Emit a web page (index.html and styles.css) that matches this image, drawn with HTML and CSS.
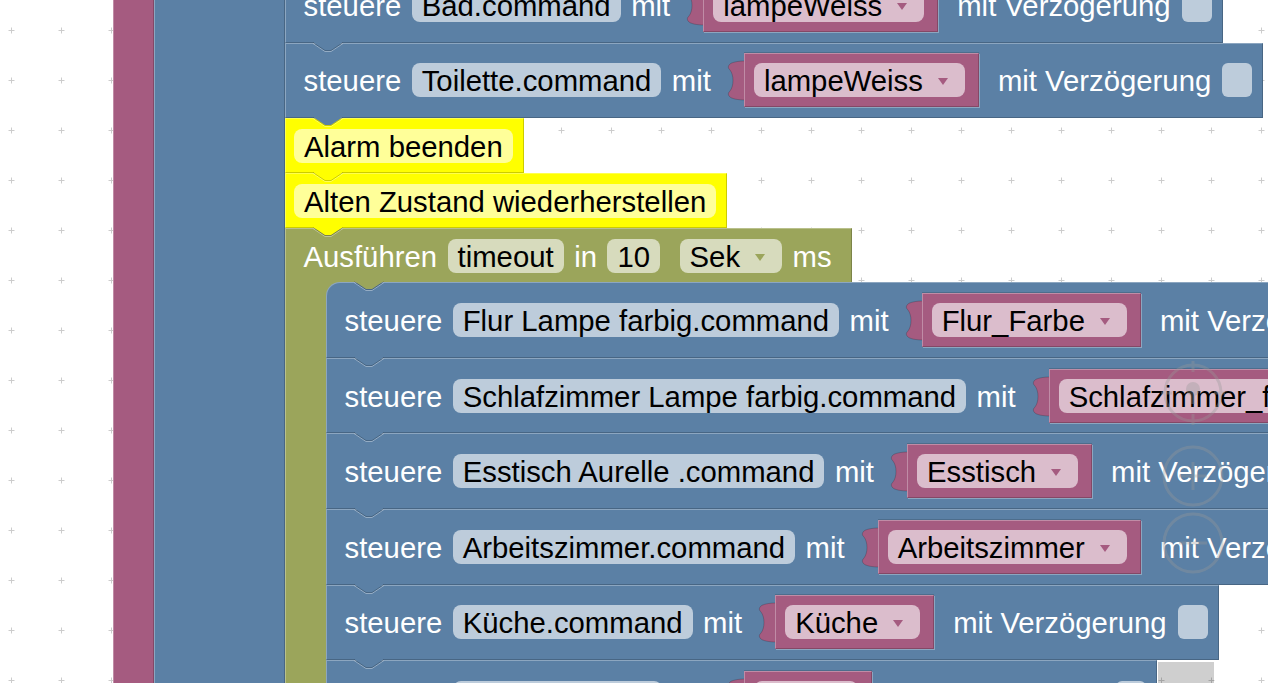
FILE: index.html
```html
<!DOCTYPE html>
<html lang="de">

<head>
    <meta charset="UTF-8">
    <meta name="viewport" content="width=device-width, initial-scale=1.0">
    <title>Blockly – Alarm</title>
    <link rel="stylesheet" href="styles.css">
</head>

<body>
    <div class="workspace">
        <svg class="grid" width="1268" height="683">
            <defs>
                <pattern id="gridCross" width="50" height="50" patternUnits="userSpaceOnUse">
                    <path d="M8.5 30.5h6M11.5 27.5v6" stroke="#cccccc" />
                </pattern>
            </defs>
            <rect width="1268" height="683" fill="url(#gridCross)" />
        </svg>

        <div class="marker"></div>

        <div class="canvas">
            <div class="c-block event">
                <div class="arm"></div>
                <div class="c-block logic">
                    <div class="arm"></div>
                    <div class="stack">

                        <div class="stmt blue">
                            <span class="label">steuere</span>
                            <span class="field">Bad.command</span>
                            <span class="label">mit</span>
                            <span class="value">
                                <svg class="tab" viewBox="0 0 17 40"><path d="M17 0C11 0 3 1 1 4C0 6 0 7 2 9C6 14 6 25 2 30C0 32 0 33 1 35C3 38 11 39 17 39Z" /></svg>
                                <span class="body"><span class="field dd">lampeWeiss<i></i></span></span>
                            </span>
                            <span class="label">mit Verzögerung</span>
                            <span class="check"></span>
                            <svg class="notch" width="32" height="11"><path class="nl" d="M0 1.5L12 9.5H18L30 1.5" /><path class="nf" d="M0 0L12 8H18L30 0Z" /><path class="nd" d="M0 .5L12 8.5H18L30 .5" /></svg>
                        </div>

                        <div class="stmt blue">
                            <span class="label">steuere</span>
                            <span class="field">Toilette.command</span>
                            <span class="label">mit</span>
                            <span class="value">
                                <svg class="tab" viewBox="0 0 17 40"><path d="M17 0C11 0 3 1 1 4C0 6 0 7 2 9C6 14 6 25 2 30C0 32 0 33 1 35C3 38 11 39 17 39Z" /></svg>
                                <span class="body"><span class="field dd">lampeWeiss<i></i></span></span>
                            </span>
                            <span class="label">mit Verzögerung</span>
                            <span class="check"></span>
                            <svg class="notch" width="32" height="11"><path class="nl" d="M0 1.5L12 9.5H18L30 1.5" /><path class="nf" d="M0 0L12 8H18L30 0Z" /><path class="nd" d="M0 .5L12 8.5H18L30 .5" /></svg>
                        </div>

                        <div class="stmt yellow">
                            <span class="field">Alarm beenden</span>
                            <svg class="notch" width="32" height="11"><path class="nl" d="M0 1.5L12 9.5H18L30 1.5" /><path class="nf" d="M0 0L12 8H18L30 0Z" /><path class="nd" d="M0 .5L12 8.5H18L30 .5" /></svg>
                        </div>

                        <div class="stmt yellow">
                            <span class="field">Alten Zustand wiederherstellen</span>
                            <svg class="notch" width="32" height="11"><path class="nl" d="M0 1.5L12 9.5H18L30 1.5" /><path class="nf" d="M0 0L12 8H18L30 0Z" /><path class="nd" d="M0 .5L12 8.5H18L30 .5" /></svg>
                        </div>

                        <div class="c-stmt timer">
                            <div class="stmt head">
                                <span class="label">Ausführen</span>
                                <span class="field">timeout</span>
                                <span class="label">in</span>
                                <span class="field">10</span>
                                <span class="field dd">Sek<i></i></span>
                                <span class="label">ms</span>
                                <svg class="notch" width="32" height="11"><path class="nl" d="M0 1.5L12 9.5H18L30 1.5" /><path class="nf" d="M0 0L12 8H18L30 0Z" /><path class="nd" d="M0 .5L12 8.5H18L30 .5" /></svg>
                            </div>
                            <div class="c-body">
                                <div class="arm"></div>
                                <div class="stack">

                                    <div class="stmt blue">
                                        <span class="label">steuere</span>
                                        <span class="field">Flur Lampe farbig.command</span>
                                        <span class="label">mit</span>
                                        <span class="value">
                                            <svg class="tab" viewBox="0 0 17 40"><path d="M17 0C11 0 3 1 1 4C0 6 0 7 2 9C6 14 6 25 2 30C0 32 0 33 1 35C3 38 11 39 17 39Z" /></svg>
                                            <span class="body"><span class="field dd">Flur_Farbe<i></i></span></span>
                                        </span>
                                        <span class="label">mit Verzögerung</span>
                                        <span class="check"></span>
                                        <svg class="notch" width="32" height="11"><path class="nl" d="M0 1.5L12 9.5H18L30 1.5" /><path class="nf" d="M0 0L12 8H18L30 0Z" /><path class="nd" d="M0 .5L12 8.5H18L30 .5" /></svg>
                                    </div>

                                    <div class="stmt blue">
                                        <span class="label">steuere</span>
                                        <span class="field">Schlafzimmer Lampe farbig.command</span>
                                        <span class="label">mit</span>
                                        <span class="value">
                                            <svg class="tab" viewBox="0 0 17 40"><path d="M17 0C11 0 3 1 1 4C0 6 0 7 2 9C6 14 6 25 2 30C0 32 0 33 1 35C3 38 11 39 17 39Z" /></svg>
                                            <span class="body"><span class="field dd">Schlafzimmer_farbig<i></i></span></span>
                                        </span>
                                        <span class="label">mit Verzögerung</span>
                                        <span class="check"></span>
                                        <svg class="notch" width="32" height="11"><path class="nl" d="M0 1.5L12 9.5H18L30 1.5" /><path class="nf" d="M0 0L12 8H18L30 0Z" /><path class="nd" d="M0 .5L12 8.5H18L30 .5" /></svg>
                                    </div>

                                    <div class="stmt blue">
                                        <span class="label">steuere</span>
                                        <span class="field">Esstisch Aurelle .command</span>
                                        <span class="label">mit</span>
                                        <span class="value">
                                            <svg class="tab" viewBox="0 0 17 40"><path d="M17 0C11 0 3 1 1 4C0 6 0 7 2 9C6 14 6 25 2 30C0 32 0 33 1 35C3 38 11 39 17 39Z" /></svg>
                                            <span class="body"><span class="field dd">Esstisch<i></i></span></span>
                                        </span>
                                        <span class="label">mit Verzögerung</span>
                                        <span class="check"></span>
                                        <svg class="notch" width="32" height="11"><path class="nl" d="M0 1.5L12 9.5H18L30 1.5" /><path class="nf" d="M0 0L12 8H18L30 0Z" /><path class="nd" d="M0 .5L12 8.5H18L30 .5" /></svg>
                                    </div>

                                    <div class="stmt blue">
                                        <span class="label">steuere</span>
                                        <span class="field">Arbeitszimmer.command</span>
                                        <span class="label">mit</span>
                                        <span class="value">
                                            <svg class="tab" viewBox="0 0 17 40"><path d="M17 0C11 0 3 1 1 4C0 6 0 7 2 9C6 14 6 25 2 30C0 32 0 33 1 35C3 38 11 39 17 39Z" /></svg>
                                            <span class="body"><span class="field dd">Arbeitszimmer<i></i></span></span>
                                        </span>
                                        <span class="label">mit Verzögerung</span>
                                        <span class="check"></span>
                                        <svg class="notch" width="32" height="11"><path class="nl" d="M0 1.5L12 9.5H18L30 1.5" /><path class="nf" d="M0 0L12 8H18L30 0Z" /><path class="nd" d="M0 .5L12 8.5H18L30 .5" /></svg>
                                    </div>

                                    <div class="stmt blue">
                                        <span class="label">steuere</span>
                                        <span class="field">Küche.command</span>
                                        <span class="label">mit</span>
                                        <span class="value">
                                            <svg class="tab" viewBox="0 0 17 40"><path d="M17 0C11 0 3 1 1 4C0 6 0 7 2 9C6 14 6 25 2 30C0 32 0 33 1 35C3 38 11 39 17 39Z" /></svg>
                                            <span class="body"><span class="field dd">Küche<i></i></span></span>
                                        </span>
                                        <span class="label">mit Verzögerung</span>
                                        <span class="check"></span>
                                        <svg class="notch" width="32" height="11"><path class="nl" d="M0 1.5L12 9.5H18L30 1.5" /><path class="nf" d="M0 0L12 8H18L30 0Z" /><path class="nd" d="M0 .5L12 8.5H18L30 .5" /></svg>
                                    </div>

                                    <div class="stmt blue">
                                        <span class="label">steuere</span>
                                        <span class="field">Bad.command</span>
                                        <span class="label">mit</span>
                                        <span class="value">
                                            <svg class="tab" viewBox="0 0 17 40"><path d="M17 0C11 0 3 1 1 4C0 6 0 7 2 9C6 14 6 25 2 30C0 32 0 33 1 35C3 38 11 39 17 39Z" /></svg>
                                            <span class="body"><span class="field dd">Bad<i></i></span></span>
                                        </span>
                                        <span class="label">mit Verzögerung</span>
                                        <span class="check"></span>
                                    </div>

                                </div>
                            </div>
                        </div>

                    </div>
                </div>
            </div>
        </div>

        <!-- Zoom-Steuerung (halbtransparent) -->
        <svg class="zoom" width="70" height="230" viewBox="0 0 70 230">
            <g fill="none" stroke="#999999" stroke-width="3">
                <circle cx="35" cy="35" r="28" />
                <path d="M35 3v11M35 56v11M3 35h11M56 35h11" />
                <circle cx="35" cy="118" r="29" />
                <path d="M35 104v28M21 118h28" />
                <circle cx="35" cy="185" r="29" />
                <path d="M21 185h28" />
            </g>
            <circle cx="35" cy="31" r="7" fill="#999999" />
            <path d="M35 36v10" stroke="#999999" stroke-width="4" />
        </svg>
    </div>
</body>

</html>
```

FILE: styles.css
```css
body {
    margin: 0;
    background-color: #ffffff;
    font-family: "Liberation Sans", Arial, sans-serif;
}

.workspace {
    position: relative;
    width: 1268px;
    height: 683px;
    overflow: hidden;
    background-color: #ffffff;
}

.grid {
    position: absolute;
    left: 0;
    top: 0;
}

.marker {
    position: absolute;
    left: 1158px;
    top: 662px;
    width: 56px;
    height: 30px;
    background: rgba(0, 0, 0, 0.19);
}

.canvas {
    position: absolute;
    left: 113px;
    top: -33px;
    display: flex;
    width: max-content;
    font-size: 29.3px;
    line-height: 34px;
    white-space: nowrap;
}

/* Blockfarben */
.event { --fill: #a55b80; }
.logic { --fill: #5b80a5; }
.blue { --fill: #5b80a5; }
.yellow { --fill: #ffff00; }
.timer { --fill: #9ba55b; }
.value { --fill: #a55b80; }

.c-block {
    display: flex;
}

.arm {
    flex: none;
    background: var(--fill);
    border-left: 1px solid rgba(255, 255, 255, 0.3);
    border-right: 1px solid rgba(0, 0, 0, 0.2);
}

.event > .arm {
    width: 39px;
}

.logic > .arm {
    width: 129px;
}

.c-body > .arm {
    width: 40px;
    border-right: none;
}

.stack {
    display: flex;
    flex-direction: column;
    align-items: flex-start;
}

.c-stmt {
    display: flex;
    flex-direction: column;
    align-items: flex-start;
}

.c-body {
    display: flex;
}

.c-body > .stack {
    background: linear-gradient(#9ba55b, #9ba55b) no-repeat 0 0 / 16px 16px;
}

.c-body > .stack > .stmt:first-child {
    border-top-left-radius: 14px;
}

.stmt {
    position: relative;
    display: flex;
    align-items: center;
    box-sizing: border-box;
    height: 75.6px;
    padding: 0 10px 0 17.5px;
    background: var(--fill);
    border: 1px solid;
    border-color: rgba(255, 255, 255, 0.3) rgba(0, 0, 0, 0.2) rgba(0, 0, 0, 0.2) rgba(255, 255, 255, 0.3);
    color: #ffffff;
}

.stmt.yellow {
    height: 55px;
    padding: 0 10px 0 8px;
}

.stmt.head {
    height: 54px;
    padding-right: 19px;
    border-bottom: none;
}

.stmt > * + * {
    margin-left: 10.5px;
}

.stmt > .value {
    margin-left: 17px;
}

.stmt > .value + .label {
    margin-left: 19px;
}

.stmt > .check {
    margin-left: 11px;
}

.head > .dd {
    margin-left: 19.5px;
}

.label {
    padding-top: 2px;
}

.field {
    display: flex;
    align-items: center;
    box-sizing: border-box;
    height: 34px;
    padding: 2px 10px 0;
    border-radius: 8px;
    background: rgba(255, 255, 255, 0.6);
    color: #000000;
}

.field.dd {
    padding-right: 17px;
}

.field.dd i {
    margin: 1px 0 0 15px;
    border-left: 5px solid transparent;
    border-right: 5px solid transparent;
    border-top: 7px solid var(--fill);
}

.check {
    flex: none;
    width: 30px;
    height: 34px;
    border-radius: 6px;
    background: rgba(255, 255, 255, 0.6);
}

/* Werteblock mit Puzzle-Anschluss */
.value {
    display: flex;
    align-items: flex-start;
    height: 54px;
}

.tab {
    flex: none;
    width: 17px;
    height: 40px;
    margin: 8px -1px 0 0;
    overflow: visible;
    fill: var(--fill);
    stroke: rgba(0, 0, 0, 0.18);
    stroke-width: 1;
}

.value .body {
    display: flex;
    align-items: center;
    box-sizing: border-box;
    height: 54px;
    padding: 0 13px 0 9px;
    background: var(--fill);
    border: 1px solid;
    border-color: rgba(255, 255, 255, 0.3) rgba(0, 0, 0, 0.2) rgba(0, 0, 0, 0.2) rgba(255, 255, 255, 0.3);
    box-shadow: 1px 1px 0 rgba(255, 255, 255, 0.3), 0 -1px 0 rgba(0, 0, 0, 0.15);
}

/* Verbindungsnase unter jedem Block */
.stmt > .notch {
    position: absolute;
    left: 27px;
    top: 100%;
    margin: 0;
    z-index: 1;
    overflow: visible;
}

.stmt.head > .notch {
    left: 67.5px;
    top: calc(100% - 1px);
}

.notch .nl {
    fill: none;
    stroke: rgba(255, 255, 255, 0.35);
}

.notch .nf {
    fill: var(--fill);
}

.notch .nd {
    fill: none;
    stroke: rgba(0, 0, 0, 0.2);
}

.zoom {
    position: absolute;
    left: 1158px;
    top: 358px;
    opacity: 0.35;
}
```
